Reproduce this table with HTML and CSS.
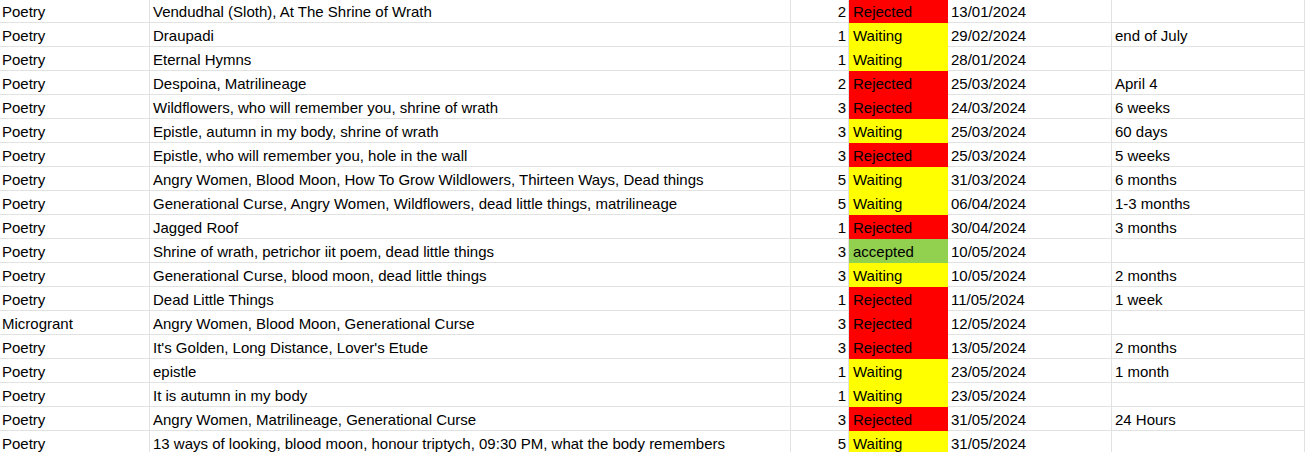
FILE: index.html
```html
<!DOCTYPE html>
<html>
<head>
<meta charset="utf-8">
<link rel="stylesheet" href="styles.css">
</head>
<body>
<div class="sheet">
  <div class="c">Poetry</div><div class="c">Vendudhal (Sloth), At The Shrine of Wrath</div><div class="c n">2</div><div class="c s rej">Rejected</div><div class="c">13/01/2024</div><div class="c"></div>
  <div class="c">Poetry</div><div class="c">Draupadi</div><div class="c n">1</div><div class="c s wait">Waiting</div><div class="c">29/02/2024</div><div class="c">end of July</div>
  <div class="c">Poetry</div><div class="c">Eternal Hymns</div><div class="c n">1</div><div class="c s wait">Waiting</div><div class="c">28/01/2024</div><div class="c"></div>
  <div class="c">Poetry</div><div class="c">Despoina, Matrilineage</div><div class="c n">2</div><div class="c s rej">Rejected</div><div class="c">25/03/2024</div><div class="c">April 4</div>
  <div class="c">Poetry</div><div class="c">Wildflowers, who will remember you, shrine of wrath</div><div class="c n">3</div><div class="c s rej">Rejected</div><div class="c">24/03/2024</div><div class="c">6 weeks</div>
  <div class="c">Poetry</div><div class="c">Epistle, autumn in my body, shrine of wrath</div><div class="c n">3</div><div class="c s wait">Waiting</div><div class="c">25/03/2024</div><div class="c">60 days</div>
  <div class="c">Poetry</div><div class="c">Epistle, who will remember you, hole in the wall</div><div class="c n">3</div><div class="c s rej">Rejected</div><div class="c">25/03/2024</div><div class="c">5 weeks</div>
  <div class="c">Poetry</div><div class="c">Angry Women, Blood Moon, How To Grow Wildlowers, Thirteen Ways, Dead things</div><div class="c n">5</div><div class="c s wait">Waiting</div><div class="c">31/03/2024</div><div class="c">6 months</div>
  <div class="c">Poetry</div><div class="c">Generational Curse, Angry Women, Wildflowers, dead little things, matrilineage</div><div class="c n">5</div><div class="c s wait">Waiting</div><div class="c">06/04/2024</div><div class="c">1-3 months</div>
  <div class="c">Poetry</div><div class="c">Jagged Roof</div><div class="c n">1</div><div class="c s rej">Rejected</div><div class="c">30/04/2024</div><div class="c">3 months</div>
  <div class="c">Poetry</div><div class="c">Shrine of wrath, petrichor iit poem, dead little things</div><div class="c n">3</div><div class="c s acc">accepted</div><div class="c">10/05/2024</div><div class="c"></div>
  <div class="c">Poetry</div><div class="c">Generational Curse, blood moon, dead little things</div><div class="c n">3</div><div class="c s wait">Waiting</div><div class="c">10/05/2024</div><div class="c">2 months</div>
  <div class="c">Poetry</div><div class="c">Dead Little Things</div><div class="c n">1</div><div class="c s rej">Rejected</div><div class="c">11/05/2024</div><div class="c">1 week</div>
  <div class="c">Microgrant</div><div class="c">Angry Women, Blood Moon, Generational Curse</div><div class="c n">3</div><div class="c s rej">Rejected</div><div class="c">12/05/2024</div><div class="c"></div>
  <div class="c">Poetry</div><div class="c">It's Golden, Long Distance, Lover's Etude</div><div class="c n">3</div><div class="c s rej">Rejected</div><div class="c">13/05/2024</div><div class="c">2 months</div>
  <div class="c">Poetry</div><div class="c">epistle</div><div class="c n">1</div><div class="c s wait">Waiting</div><div class="c">23/05/2024</div><div class="c">1 month</div>
  <div class="c">Poetry</div><div class="c">It is autumn in my body</div><div class="c n">1</div><div class="c s wait">Waiting</div><div class="c">23/05/2024</div><div class="c"></div>
  <div class="c">Poetry</div><div class="c">Angry Women, Matrilineage, Generational Curse</div><div class="c n">3</div><div class="c s rej">Rejected</div><div class="c">31/05/2024</div><div class="c">24 Hours</div>
  <div class="c">Poetry</div><div class="c">13 ways of looking, blood moon, honour triptych, 09:30 PM, what the body remembers</div><div class="c n">5</div><div class="c s wait">Waiting</div><div class="c">31/05/2024</div><div class="c"></div>
</div>
</body>
</html>
```
FILE: styles.css
```css
html, body {
  margin: 0;
  padding: 0;
  background: #ffffff;
  overflow: hidden;
}
.sheet {
  margin-top: -1px;
  display: grid;
  grid-template-columns: 150px 641px 58px 99px 164px 1fr;
  grid-auto-rows: 24px;
  font-family: "Liberation Sans", Arial, sans-serif;
  font-size: 15px;
  color: #000000;
}
.c {
  box-sizing: border-box;
  display: flex;
  align-items: flex-end;
  padding: 0 3px 2px 3px;
  line-height: 17px;
  white-space: nowrap;
  overflow: hidden;
  border-right: 1px solid #e2e2e2;
  border-bottom: 1px solid #e2e2e2;
}
.c:nth-child(6n+1) {
  padding-left: 2px;
}
.n {
  justify-content: flex-end;
  padding-right: 2px;
}
.s {
  padding-left: 4px;
  border-color: transparent;
}
.rej { background: #ff0000; }
.wait { background: #ffff00; }
.acc { background: #92d050; }
```
